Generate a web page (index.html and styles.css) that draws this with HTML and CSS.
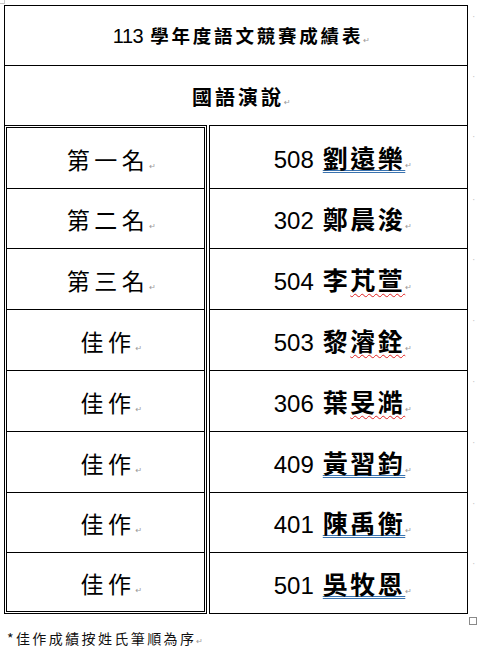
FILE: index.html
```html
<!DOCTYPE html>
<html lang="zh-Hant">
<head>
<meta charset="utf-8">
<title>113 學年度語文競賽成績表</title>
<link rel="stylesheet" href="styles.css">
</head>
<body>
<div class="page">
  <span class="move-handle"></span>
  <div class="head">
    <div class="hrow hrow1 eoc"><span class="txt"><span class="hnum">113</span><span class="hcjk">學年度語文競賽成績表</span><span class="pm">↵</span></span></div>
    <div class="hrow hrow2 eoc"><span class="txt"><span class="hcjk2">國語演說</span><span class="pm">↵</span></span></div>
  </div>
  <div class="lower">
    <div class="rank-box">
      <div class="cell rank"><span class="txt">第一名<span class="pm">↵</span></span></div>
      <div class="cell rank"><span class="txt">第二名<span class="pm">↵</span></span></div>
      <div class="cell rank"><span class="txt">第三名<span class="pm">↵</span></span></div>
      <div class="cell rank"><span class="txt">佳作<span class="pm">↵</span></span></div>
      <div class="cell rank"><span class="txt">佳作<span class="pm">↵</span></span></div>
      <div class="cell rank"><span class="txt">佳作<span class="pm">↵</span></span></div>
      <div class="cell rank"><span class="txt">佳作<span class="pm">↵</span></span></div>
      <div class="cell rank"><span class="txt">佳作<span class="pm">↵</span></span></div>
    </div>
    <div class="name-box">
      <div class="cell name eoc"><span class="txt"><span class="num">508</span><span class="nm blue">劉遠樂</span><span class="pm">↵</span></span></div>
      <div class="cell name eoc"><span class="txt"><span class="num">302</span><span class="nm">鄭晨浚</span><span class="pm">↵</span></span></div>
      <div class="cell name eoc"><span class="txt"><span class="num">504</span><span class="nm">李<span class="wavy">芃萱</span></span><span class="pm">↵</span></span></div>
      <div class="cell name eoc"><span class="txt"><span class="num">503</span><span class="nm">黎<span class="wavy">濬銓</span></span><span class="pm">↵</span></span></div>
      <div class="cell name eoc"><span class="txt"><span class="num">306</span><span class="nm">葉<span class="wavy">旻澔</span></span><span class="pm">↵</span></span></div>
      <div class="cell name eoc"><span class="txt"><span class="num">409</span><span class="nm blue">黃習鈞</span><span class="pm">↵</span></span></div>
      <div class="cell name eoc"><span class="txt"><span class="num">401</span><span class="nm blue">陳禹衡</span><span class="pm">↵</span></span></div>
      <div class="cell name eoc"><span class="txt"><span class="num">501</span><span class="nm blue">吳牧恩</span><span class="pm">↵</span></span></div>
    </div>
  </div>
  <div class="handle-row"><span class="resize-handle"></span></div>
  <p class="note">*佳作成績按姓氏筆順為序<span class="pm">↵</span></p>
</div>
</body>
</html>
```

FILE: styles.css
```css
html, body {
  margin: 0;
  padding: 0;
  background: #ffffff;
}

body {
  color: #000;
  font-family: "Noto Sans CJK TC", "Noto Sans CJK SC", sans-serif;
}

.page {
  position: relative;
  width: 476px;
  padding: 5px 0 0 4px;
}

.move-handle {
  position: absolute;
  left: 0;
  top: 0;
  width: 4px;
  height: 3px;
  border: 1px solid #c8c8c8;
  border-top: none;
  border-left: none;
}

.txt {
  white-space: nowrap;
  line-height: 1.2;
}

.pm {
  display: inline-block;
  width: 0;
  overflow: visible;
  font-family: "DejaVu Sans", sans-serif;
  font-size: 8px;
  font-weight: normal;
  color: #9a9a9a;
  letter-spacing: 0;
  text-decoration: none;
  vertical-align: baseline;
}

/* end-of-cell markers to the right of the table */
.eoc {
  position: relative;
}

.eoc::after {
  content: "·";
  position: absolute;
  right: -8px;
  top: 6px;
  font-family: "DejaVu Sans", sans-serif;
  font-size: 9px;
  color: #c4c4c4;
}

/* header */
.head {
  width: 464px;
  box-sizing: border-box;
  border: 1px solid #000;
  border-bottom: none;
}

.hrow {
  display: flex;
  align-items: center;
  justify-content: center;
  box-sizing: border-box;
}

.hrow1 {
  height: 60px;
  border-bottom: 1px solid #000;
  padding-left: 4px;
}

.hrow2 {
  height: 59px;
  padding-top: 2px;
  padding-left: 4px;
}

.hnum {
  font-family: "Liberation Sans", Arial, sans-serif;
  font-size: 20px;
  letter-spacing: -0.5px;
  margin-right: 7px;
}

.hcjk {
  font-size: 18.5px;
  font-weight: 700;
  letter-spacing: 2.8px;
}

.hcjk2 {
  font-size: 20px;
  font-weight: 700;
  letter-spacing: 3px;
}

/* lower tables */
.lower {
  display: flex;
  gap: 2px;
}

.rank-box {
  width: 203px;
  box-sizing: border-box;
  border: 3px double #000;
  display: grid;
  grid-template-rows: 61px 60px 61px 61px 61px 61px 60px 58px;
}

.name-box {
  width: 259px;
  box-sizing: border-box;
  border: 1px solid #000;
  display: grid;
  grid-template-rows: 63px 60px 61px 61px 61px 61px 60px 60px;
}

.cell {
  display: flex;
  align-items: center;
  justify-content: center;
  box-sizing: border-box;
  border-bottom: 1px solid #000;
}

.cell:last-child {
  border-bottom: none;
}

.rank {
  font-size: 23px;
  font-weight: 400;
  letter-spacing: 4.5px;
  padding-left: 5px;
  padding-top: 3px;
}

.name {
  padding-top: 2px;
  padding-left: 2px;
}

.num {
  font-family: "Liberation Sans", Arial, sans-serif;
  font-size: 24px;
  margin-right: 9px;
}

.nm {
  font-size: 25px;
  font-weight: 700;
  letter-spacing: 2.5px;
  text-underline-offset: 2px;
}

.blue {
  text-decoration-line: underline;
  text-decoration-style: double;
  text-decoration-color: #3a73b0;
  text-decoration-thickness: 1px;
}

.wavy {
  text-decoration-line: underline;
  text-decoration-style: wavy;
  text-decoration-color: #e02020;
  text-decoration-thickness: 1px;
  text-underline-offset: 3px;
}

/* resize handle and note */
.handle-row {
  display: flex;
  padding-left: 465px;
  margin-top: 3px;
  height: 8px;
}

.resize-handle {
  width: 6px;
  height: 6px;
  border: 1px solid #8a8a8a;
}

.note {
  margin: 4px 0 0 3px;
  font-size: 14px;
  line-height: 18px;
  letter-spacing: 2.4px;
  color: #111;
}
```
